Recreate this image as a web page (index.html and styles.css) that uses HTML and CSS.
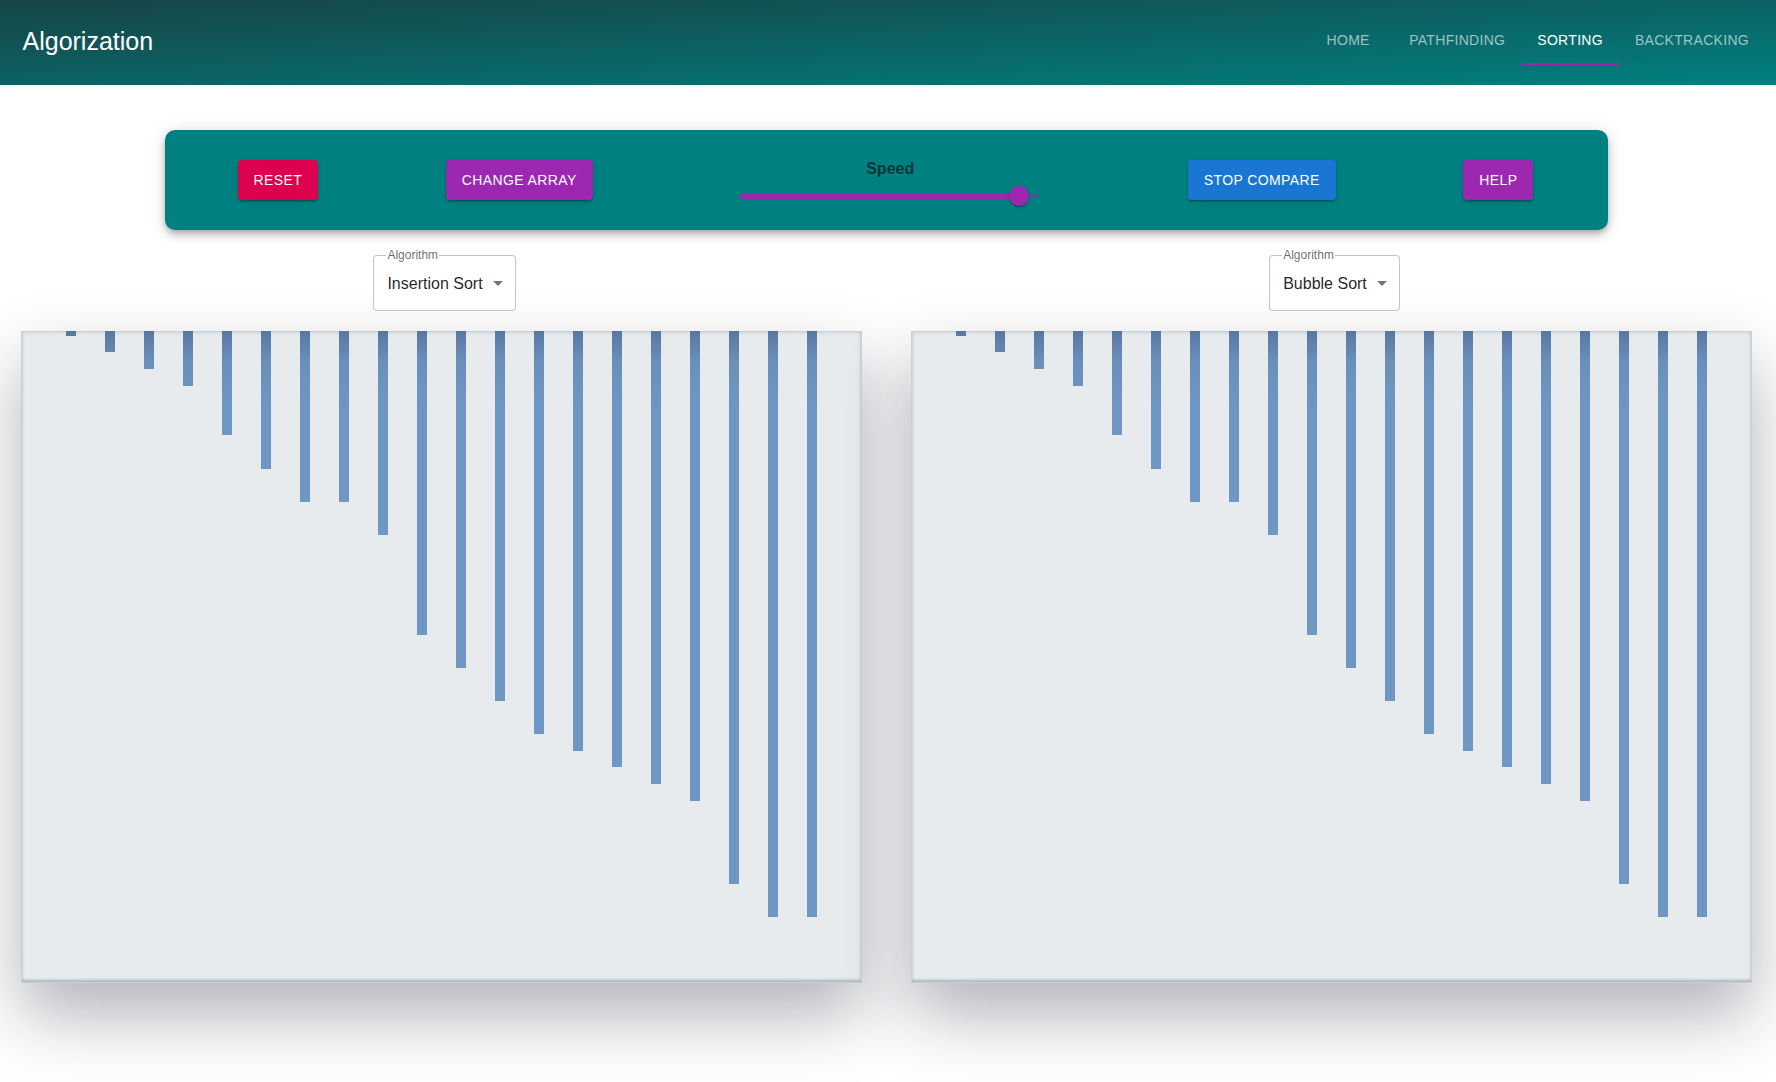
FILE: index.html
```html
<!DOCTYPE html>
<html lang="en">
<head>
<meta charset="utf-8">
<title>Algorization</title>
<link rel="stylesheet" href="styles.css">
</head>
<body>
<header class="appbar">
  <div class="brand">Algorization</div>
  <nav class="tabs">
    <a class="tab">Home</a>
    <a class="tab">Pathfinding</a>
    <a class="tab active">Sorting</a>
    <a class="tab">Backtracking</a>
  </nav>
</header>
<main class="page">
  <section class="controls">
    <button class="btn btn-red">Reset</button>
    <button class="btn btn-purple">Change Array</button>
    <div class="speed">
      <div class="speed-label">Speed</div>
      <div class="slider">
        <div class="rail"></div>
        <div class="track" style="width:93%"></div>
        <div class="thumb" style="left:93%"></div>
      </div>
    </div>
    <button class="btn btn-blue">Stop Compare</button>
    <button class="btn btn-purple">Help</button>
  </section>
  <section class="compare">
    <div class="pane">
      <div class="select">
        <span class="select-label">Algorithm</span>
        <span class="select-value">Insertion Sort</span>
        <span class="select-arrow"></span>
      </div>
      <div class="chart">
        <div class="bar" style="height:4.7px"></div>
        <div class="bar" style="height:21.3px"></div>
        <div class="bar" style="height:37.9px"></div>
        <div class="bar" style="height:54.5px"></div>
        <div class="bar" style="height:104.3px"></div>
        <div class="bar" style="height:137.5px"></div>
        <div class="bar" style="height:170.7px"></div>
        <div class="bar" style="height:170.7px"></div>
        <div class="bar" style="height:203.9px"></div>
        <div class="bar" style="height:303.5px"></div>
        <div class="bar" style="height:336.7px"></div>
        <div class="bar" style="height:369.9px"></div>
        <div class="bar" style="height:403.1px"></div>
        <div class="bar" style="height:419.7px"></div>
        <div class="bar" style="height:436.3px"></div>
        <div class="bar" style="height:452.9px"></div>
        <div class="bar" style="height:469.5px"></div>
        <div class="bar" style="height:552.5px"></div>
        <div class="bar" style="height:585.7px"></div>
        <div class="bar" style="height:585.7px"></div>
      </div>
    </div>
    <div class="pane">
      <div class="select">
        <span class="select-label">Algorithm</span>
        <span class="select-value">Bubble Sort</span>
        <span class="select-arrow"></span>
      </div>
      <div class="chart">
        <div class="bar" style="height:4.7px"></div>
        <div class="bar" style="height:21.3px"></div>
        <div class="bar" style="height:37.9px"></div>
        <div class="bar" style="height:54.5px"></div>
        <div class="bar" style="height:104.3px"></div>
        <div class="bar" style="height:137.5px"></div>
        <div class="bar" style="height:170.7px"></div>
        <div class="bar" style="height:170.7px"></div>
        <div class="bar" style="height:203.9px"></div>
        <div class="bar" style="height:303.5px"></div>
        <div class="bar" style="height:336.7px"></div>
        <div class="bar" style="height:369.9px"></div>
        <div class="bar" style="height:403.1px"></div>
        <div class="bar" style="height:419.7px"></div>
        <div class="bar" style="height:436.3px"></div>
        <div class="bar" style="height:452.9px"></div>
        <div class="bar" style="height:469.5px"></div>
        <div class="bar" style="height:552.5px"></div>
        <div class="bar" style="height:585.7px"></div>
        <div class="bar" style="height:585.7px"></div>
      </div>
    </div>
  </section>
</main>
</body>
</html>
```
FILE: styles.css
```css
html, body {
  margin: 0;
  background: #ffffff;
  font-family: "Liberation Sans", Arial, sans-serif;
}

.appbar {
  height: 85px;
  box-sizing: border-box;
  padding: 0 11px 3px 22.5px;
  display: flex;
  align-items: center;
  justify-content: space-between;
  background: linear-gradient(to bottom right, #174446, #008080);
  color: #ffffff;
}

.brand {
  font-size: 25px;
  line-height: 1.15;
  color: #ffffff;
}

.tabs {
  display: flex;
}

.tab {
  position: relative;
  min-width: 90px;
  height: 48px;
  box-sizing: border-box;
  padding: 0 16px 2px;
  display: flex;
  align-items: center;
  justify-content: center;
  font-size: 14px;
  letter-spacing: 0.3px;
  text-transform: uppercase;
  color: rgba(255, 255, 255, 0.6);
  cursor: pointer;
}

.tab.active {
  color: #ffffff;
}

.tab.active::after {
  content: "";
  position: absolute;
  left: 0;
  right: 0;
  bottom: 0;
  height: 2px;
  background: #9c27b0;
}

.page {
  min-height: 997px;
  padding-bottom: 1px;
}

.controls {
  width: 1443px;
  height: 100px;
  margin: 45px 0 0 165px;
  box-sizing: border-box;
  padding: 0 74.5px 0 72.5px;
  display: flex;
  align-items: center;
  justify-content: space-between;
  background: #008080;
  border-radius: 10px;
  box-shadow: 0 3px 5px -1px rgba(0, 0, 0, 0.2), 0 6px 10px 0 rgba(0, 0, 0, 0.14), 0 1px 18px 0 rgba(0, 0, 0, 0.12);
}

.btn {
  height: 40px;
  padding: 0 16px;
  border: 0;
  border-radius: 4px;
  font-family: "Liberation Sans", Arial, sans-serif;
  font-size: 14px;
  letter-spacing: 0.4px;
  text-transform: uppercase;
  color: #ffffff;
  cursor: pointer;
  box-shadow: 0 3px 1px -2px rgba(0, 0, 0, 0.2), 0 2px 2px 0 rgba(0, 0, 0, 0.14), 0 1px 5px 0 rgba(0, 0, 0, 0.12);
}

.btn-red { background: #dc004e; }
.btn-purple { background: #9c27b0; }
.btn-blue { background: #1976d2; }

.speed {
  width: 300px;
  margin: 10px 20px 0;
  display: flex;
  flex-direction: column;
  align-items: center;
}

.speed-label {
  font-size: 16px;
  font-weight: bold;
  line-height: 20px;
  color: rgba(0, 0, 0, 0.6);
}

.slider {
  position: relative;
  width: 100%;
  height: 30px;
  margin-top: 2px;
}

.rail {
  position: absolute;
  left: 0;
  right: 0;
  top: 13px;
  height: 4px;
  border-radius: 2px;
  background: #9c27b0;
  opacity: 0.38;
}

.track {
  position: absolute;
  left: 0;
  top: 12px;
  height: 6px;
  border-radius: 3px;
  background: #9c27b0;
}

.thumb {
  position: absolute;
  top: 5px;
  width: 20px;
  height: 20px;
  margin-left: -10px;
  border-radius: 50%;
  background: #9c27b0;
  box-shadow: 0 3px 1px -2px rgba(0, 0, 0, 0.2), 0 2px 2px 0 rgba(0, 0, 0, 0.14), 0 1px 5px 0 rgba(0, 0, 0, 0.12);
}

.compare {
  display: flex;
  gap: 49px;
  padding-left: 21px;
  margin-top: 25px;
}

.pane {
  width: 841px;
  display: flex;
  flex-direction: column;
  align-items: center;
}

.select {
  position: relative;
  height: 56px;
  box-sizing: border-box;
  margin-left: 6px;
  padding: 0 32px 0 13px;
  display: flex;
  align-items: center;
  border: 1px solid rgba(0, 0, 0, 0.23);
  border-radius: 4px;
  background: #ffffff;
}

.select-label {
  position: absolute;
  left: 12px;
  top: -8px;
  padding: 0 1px;
  font-size: 12px;
  line-height: 14px;
  color: rgba(0, 0, 0, 0.6);
  background: #ffffff;
}

.select-value {
  font-size: 16px;
  line-height: 23px;
  color: rgba(0, 0, 0, 0.87);
}

.select-arrow {
  position: absolute;
  right: 12px;
  top: 50%;
  margin-top: -2.5px;
  width: 0;
  height: 0;
  border-left: 5px solid transparent;
  border-right: 5px solid transparent;
  border-top: 5px solid rgba(0, 0, 0, 0.54);
}

.chart {
  margin-top: 20px;
  width: 841px;
  height: 652px;
  display: flex;
  justify-content: center;
  align-items: flex-start;
  gap: 29px;
  background: #e7ebed;
  box-shadow:
    inset 0 0 0 1px #c9d1d6,
    inset 0 0 4px rgba(110, 130, 145, 0.5),
    inset 0 -3px 3px rgba(110, 130, 145, 0.45),
    0 32px 64px rgba(20, 15, 40, 0.32);
}

.bar {
  flex: none;
  width: 10px;
  background: linear-gradient(#5877a0, #6a8fbb 30px, #6f97c3 80px);
}
```
